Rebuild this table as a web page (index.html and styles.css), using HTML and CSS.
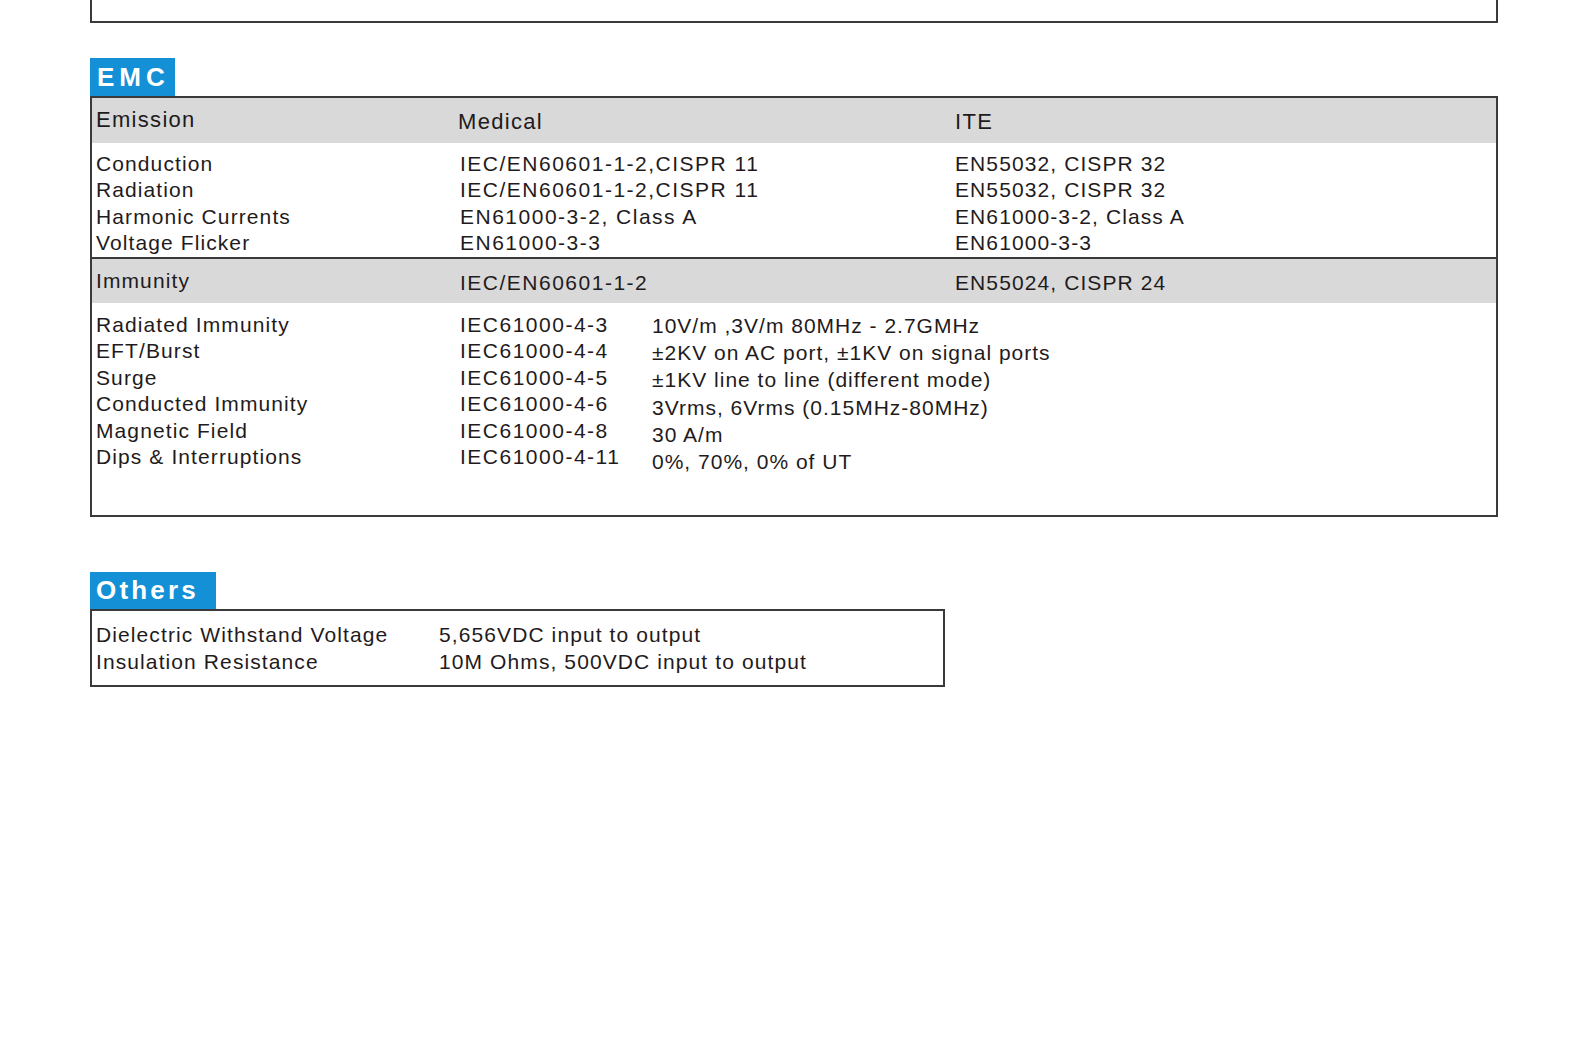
FILE: index.html
```html
<!DOCTYPE html>
<html lang="en">
<head>
<meta charset="utf-8">
<title>EMC / Others</title>
<link rel="stylesheet" href="styles.css">
</head>
<body>
<div class="page">
  <div class="topbox"></div>

  <section class="sec sec-emc">
    <div class="tab tab-emc">EMC</div>
    <div class="box emc-box">
      <div class="hdr hdr-emission grid3">
        <span class="h1">Emission</span>
        <span class="h2">Medical</span>
        <span class="h3">ITE</span>
      </div>
      <div class="emission-body grid3">
        <span>Conduction</span><span class="std">IEC/EN60601-1-2,CISPR 11</span><span>EN55032, CISPR 32</span>
        <span>Radiation</span><span class="std">IEC/EN60601-1-2,CISPR 11</span><span>EN55032, CISPR 32</span>
        <span>Harmonic Currents</span><span class="std">EN61000-3-2, Class A</span><span>EN61000-3-2, Class A</span>
        <span>Voltage Flicker</span><span class="std">EN61000-3-3</span><span>EN61000-3-3</span>
      </div>
      <div class="hdr hdr-immunity grid3">
        <span class="i1">Immunity</span>
        <span class="i2 std">IEC/EN60601-1-2</span>
        <span class="i2">EN55024, CISPR 24</span>
      </div>
      <div class="immunity-body">
        <div class="col col-label">
          <span>Radiated Immunity</span>
          <span>EFT/Burst</span>
          <span>Surge</span>
          <span>Conducted Immunity</span>
          <span>Magnetic Field</span>
          <span>Dips &amp; Interruptions</span>
        </div>
        <div class="col col-std std">
          <span>IEC61000-4-3</span>
          <span>IEC61000-4-4</span>
          <span>IEC61000-4-5</span>
          <span>IEC61000-4-6</span>
          <span>IEC61000-4-8</span>
          <span>IEC61000-4-11</span>
        </div>
        <div class="col col-val">
          <span>10V/m ,3V/m 80MHz - 2.7GMHz</span>
          <span>±2KV on AC port, ±1KV on signal ports</span>
          <span>±1KV line to line (different mode)</span>
          <span>3Vrms, 6Vrms (0.15MHz-80MHz)</span>
          <span>30 A/m</span>
          <span>0%, 70%, 0% of UT</span>
        </div>
      </div>
    </div>
  </section>

  <section class="sec sec-others">
    <div class="tab tab-others">Others</div>
    <div class="box others-box">
      <span>Dielectric Withstand Voltage</span><span>5,656VDC input to output</span>
      <span>Insulation Resistance</span><span>10M Ohms, 500VDC input to output</span>
    </div>
  </section>
</div>
</body>
</html>
```
FILE: styles.css
```css
* { box-sizing: border-box; }

html, body {
  margin: 0;
  padding: 0;
  background: #ffffff;
}

body {
  font-family: "Liberation Sans", Arial, Helvetica, sans-serif;
  color: #1f1b1c;
  font-size: 21px;
  letter-spacing: 1.1px;
}

.page {
  padding-left: 90px;
  width: 1498px;
}

.topbox {
  width: 1408px;
  height: 23px;
  border: 2px solid #3a3a3a;
  border-top: none;
}

.sec-emc { margin-top: 35px; }
.sec-others { margin-top: 55px; }

.tab {
  display: inline-block;
  vertical-align: top;
  background: #1490d6;
  color: #ffffff;
  font-weight: bold;
}

.tab-emc {
  height: 38px;
  line-height: 38px;
  font-size: 26px;
  letter-spacing: 5px;
  padding: 0 5px 0 7px;
}

.tab-others {
  height: 37px;
  line-height: 37px;
  font-size: 26px;
  letter-spacing: 3.2px;
  padding: 0 17px 0 6px;
}

.box {
  display: block;
  border: 2px solid #3a3a3a;
}

.emc-box { width: 1408px; }

.grid3 {
  display: grid;
  grid-template-columns: 364px 495px 1fr;
  padding-left: 4px;
}

.std { letter-spacing: 1.5px; }

.hdr {
  background: #d9d9d9;
}

.hdr-emission {
  height: 45px;
  line-height: 44px;
  font-size: 22px;
  letter-spacing: 1.3px;
}

.hdr-emission .h2,
.hdr-emission .h3 {
  line-height: 47px;
}

.hdr-emission .h2 { margin-left: -2px; }

.emission-body {
  padding-top: 7.5px;
  grid-auto-rows: 26.6px;
  line-height: 26.6px;
}

.hdr-immunity {
  border-top: 2px solid #3a3a3a;
  height: 46px;
  line-height: 44px;
}

.hdr-immunity .i2 {
  line-height: 48px;
}

.immunity-body {
  display: flex;
  padding: 8.75px 0 39.5px 4px;
}

.col {
  display: flex;
  flex-direction: column;
}

.col-label {
  width: 364px;
  line-height: 26.5px;
}

.col-std {
  width: 192px;
  line-height: 26.5px;
}

.col-val {
  line-height: 27.3px;
  letter-spacing: 1px;
}

.others-box {
  width: 855px;
  display: grid;
  grid-template-columns: 343px 1fr;
  grid-auto-rows: 26.5px;
  line-height: 26.5px;
  padding: 11.25px 0 9.75px 4px;
}
```
